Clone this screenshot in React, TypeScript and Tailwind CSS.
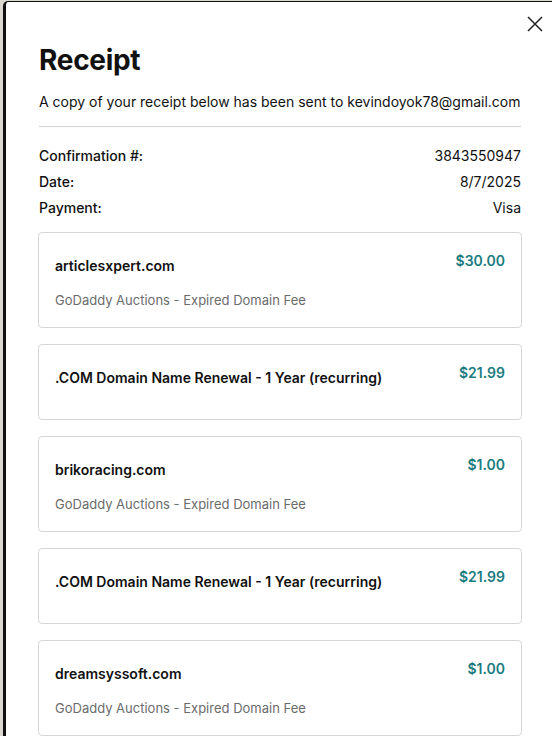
import React from 'react';

interface Item {
  title: string;
  desc?: string;
  price: string;
}

const items: Item[] = [
  { title: 'articlesxpert.com', desc: 'GoDaddy Auctions - Expired Domain Fee', price: '$30.00' },
  { title: '.COM Domain Name Renewal - 1 Year (recurring)', price: '$21.99' },
  { title: 'brikoracing.com', desc: 'GoDaddy Auctions - Expired Domain Fee', price: '$1.00' },
  { title: '.COM Domain Name Renewal - 1 Year (recurring)', price: '$21.99' },
  { title: 'dreamsyssoft.com', desc: 'GoDaddy Auctions - Expired Domain Fee', price: '$1.00' },
];

const InfoRow: React.FC<{ label: string; value: string }> = ({ label, value }) => (
  <div className="flex justify-between items-center h-[26px] text-[14px] text-[#111]">
    <span className="font-medium">{label}</span>
    <span>{value}</span>
  </div>
);

const LineItem: React.FC<{ item: Item }> = ({ item }) => (
  <div className="flex justify-between border border-[#d6d6d6] rounded-[4px] px-4 pt-5 pb-[17px]">
    <div className="pt-[3px]">
      <div className="text-[14px] leading-5 font-semibold text-[#111]">{item.title}</div>
      <div className="mt-[14px] text-[13px] leading-5 text-[#6b6b6b]">{item.desc}</div>
    </div>
    <div className="text-[14px] leading-4 font-semibold text-[#1b7b7f]">{item.price}</div>
  </div>
);

export default function App() {
  return (
    <div
      className="h-[736px] w-[552px] overflow-hidden bg-[#dcd8d2] pl-[3px] pt-[1px]"
      style={{ fontFamily: 'Inter, "Noto Sans", sans-serif' }}
    >
      <div className="relative h-full bg-white border-l-[3px] border-t border-[#111] rounded-tl-[5px] pl-[33px] pr-[31px]">
        <button className="absolute right-[8px] top-[13px] text-[#222]">
          <svg width="18" height="18" viewBox="0 0 18 18" fill="none" stroke="currentColor" strokeWidth="1.5">
            <path d="M2 2L16 16M16 2L2 16" />
          </svg>
        </button>

        <h1 className="pt-[40px] text-[28px] leading-[36px] font-bold text-[#111] tracking-[-0.3px]">Receipt</h1>
        <p className="mt-[14px] text-[14px] leading-5 text-[#111]">
          A copy of your receipt below has been sent to kevindoyok78@gmail.com
        </p>
        <div className="mt-[14px] border-t border-[#d4d4d4]" />

        <div className="mt-[15px]">
          <InfoRow label="Confirmation #:" value="3843550947" />
          <InfoRow label="Date:" value="8/7/2025" />
          <InfoRow label="Payment:" value="Visa" />
        </div>

        <div className="mt-[12px] -ml-px -mr-px flex flex-col gap-4">
          {items.map((it, i) => (
            <LineItem key={i} item={it} />
          ))}
        </div>
      </div>
    </div>
  );
}
